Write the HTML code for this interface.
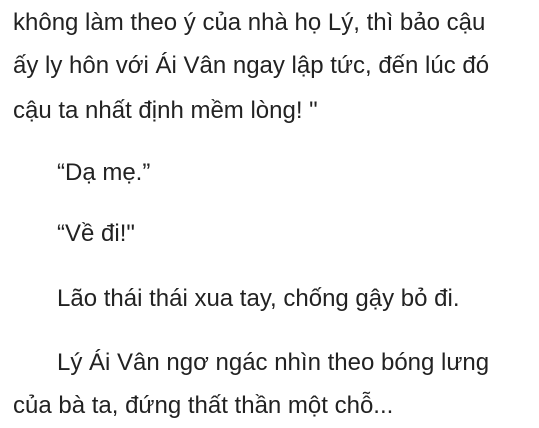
<!DOCTYPE html>
<html><head><meta charset="utf-8"><style>
html,body{margin:0;padding:0;background:#fff;width:539px;height:426px;overflow:hidden}
.l{position:absolute;left:13px;white-space:nowrap;font-family:"Liberation Sans",sans-serif;font-size:24px;line-height:44px;color:#222}
.i{left:57px}
</style></head><body>
<div class="l" style="top:1px">không làm theo ý của nhà họ Lý, thì bảo cậu</div>
<div class="l" style="top:44px">ấy ly hôn với Ái Vân ngay lập tức, đến lúc đó</div>
<div class="l" style="top:89px">cậu ta nhất định mềm lòng! "</div>
<div class="l i" style="top:151px">“Dạ mẹ.”</div>
<div class="l i" style="top:212px">“Về đi!"</div>
<div class="l i" style="top:277px">Lão thái thái xua tay, chống gậy bỏ đi.</div>
<div class="l i" style="top:341px">Lý Ái Vân ngơ ngác nhìn theo bóng lưng</div>
<div class="l" style="top:384px">của bà ta, đứng thất thần một chỗ...</div>
</body></html>
